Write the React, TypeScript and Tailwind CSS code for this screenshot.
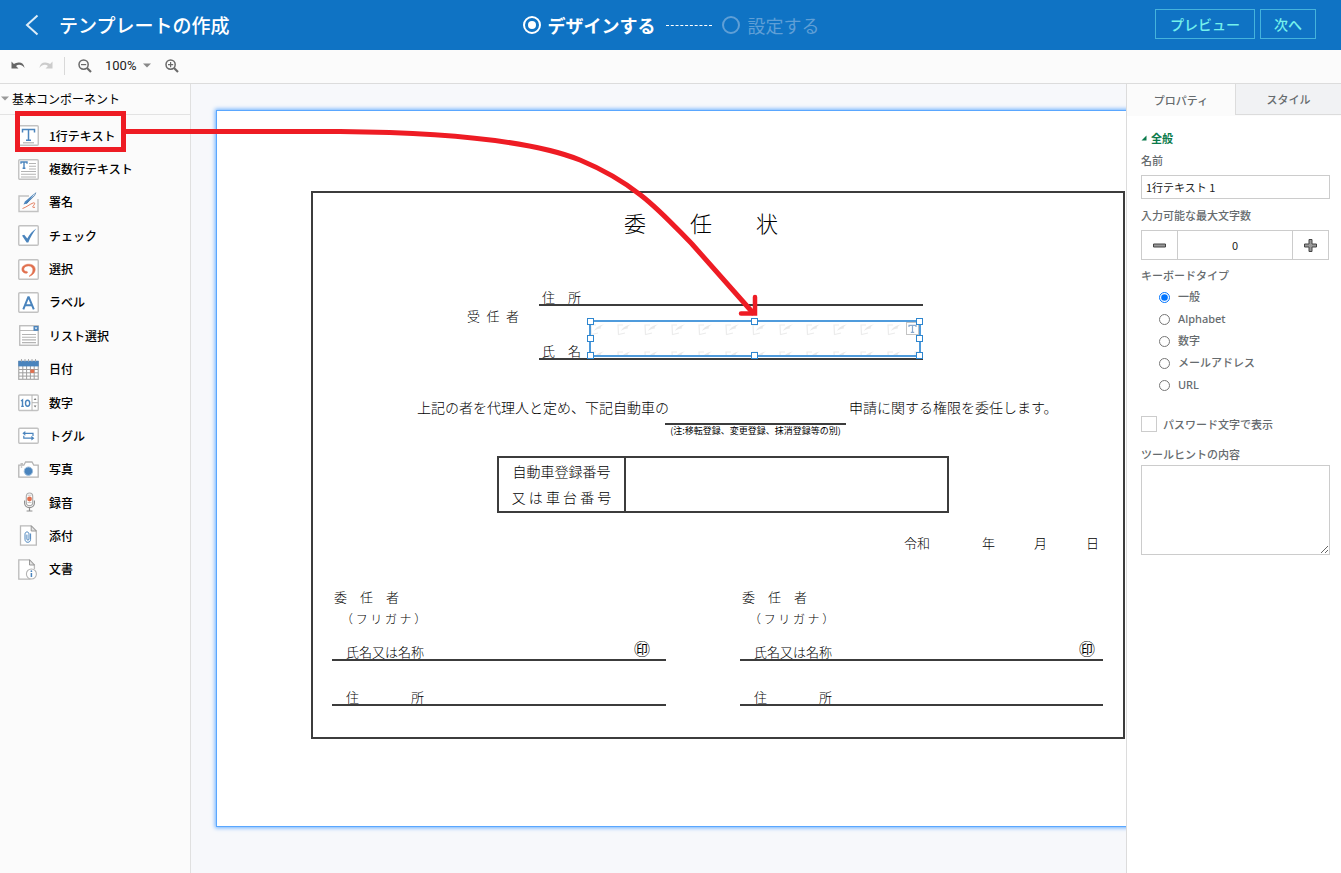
import React, { useState } from "react";

const PAPER_FONT = "font-['Noto_Sans_CJK_JP',sans-serif]";

const GREY = "#b4b4b4";
const BLUE = "#4a84bd";
const RED = "#e0704f";

function Svg({ children }: { children: React.ReactNode }) {
  return (
    <svg width="21" height="21" viewBox="0 0 21 21" fill="none" className="shrink-0" aria-hidden="true">
      {children}
    </svg>
  );
}

const Frame = ({ y = 0.75, h = 19.5 }: { y?: number; h?: number }) => (
  <rect x="0.75" y={y} width="19.5" height={h} rx="1" fill="#fff" stroke="#c2c2c2" strokeWidth="1.4" />
);

const icons = {
  text: (
    <Svg>
      <Frame />
      <path d="M4.5 7.5V4.5H16.5V7.5M10.5 4.5V15M8 15.2H13" stroke={BLUE} strokeWidth="1.5" />
      <path d="M5 17.8H16" stroke={GREY} strokeWidth="1.2" />
    </Svg>
  ),
  multiline: (
    <Svg>
      <Frame />
      <path d="M3 4.8V3H9V4.8M6 3V9M4.6 9.3H7.4" stroke={BLUE} strokeWidth="1.4" />
      <path d="M11 4.5H18M11 7.2H18M11 10H18M3 12.5H18M3 15.2H18M3 18H18" stroke={GREY} strokeWidth="1.1" />
    </Svg>
  ),
  sign: (
    <Svg>
      <path d="M11 4H1V19.5H20V7" stroke="#c2c2c2" strokeWidth="1.4" />
      <path d="M17.5 0.5L7 9.5L5.5 12.5L9 11.5Z" fill={BLUE} />
      <path d="M17.8 0.6L16.5 3.6L8.5 11.6" stroke="#34699d" strokeWidth="0.8" />
      <path d="M4.5 16.5C8 15.5 12 12 15.5 10.8C17.5 10.4 16.5 12.5 15.2 14C14 15.6 15.5 15.8 17 15.2" stroke={RED} strokeWidth="0.9" />
    </Svg>
  ),
  check: (
    <Svg>
      <Frame />
      <path d="M4 10.5L6.2 9.8L9.3 13.6C11.5 9.5 14.5 5.8 18.3 3.5C15 7.5 12.3 12.5 10.3 17.5H8.6Z" fill={BLUE} />
    </Svg>
  ),
  select: (
    <Svg>
      <Frame />
      <path
        d="M8.6 14.3C5.4 14.2 3.6 12.4 3.9 9.7C4.3 6.6 7.8 5 11.2 5.2C15 5.4 17.4 7.6 17.2 10.8C17 14 14.2 16.6 11 17.4C13 15.8 14.8 13.8 14.9 11C15 8.6 13.3 7 10.8 6.9C8 6.8 5.9 8.2 5.8 10C5.8 11.6 7 12.5 8.8 12.4C9.8 12.6 9.8 14.2 8.6 14.3Z"
        fill={RED}
        stroke={RED}
        strokeWidth="0.5"
      />
    </Svg>
  ),
  label: (
    <Svg>
      <Frame />
      <path d="M5.3 17.3L10.5 4.6L15.8 17.3M7.2 13.2H13.8" stroke={BLUE} strokeWidth="2" strokeLinejoin="bevel" />
    </Svg>
  ),
  list: (
    <Svg>
      <rect x="1.75" y="0.75" width="18.5" height="19.5" fill="#fff" stroke="#b9b9b9" strokeWidth="1.3" />
      <path d="M2 5.5H20" stroke="#b9b9b9" />
      <rect x="15.5" y="1" width="5" height="4.8" fill={BLUE} />
      <path d="M16.6 2.6H19.4L18 4.4Z" fill="#fff" />
      <path d="M4 9.5H18M4 12.2H18M4 14.9H18M4 17.6H18" stroke={GREY} strokeWidth="1.1" />
    </Svg>
  ),
  date: (
    <Svg>
      <rect x="0.75" y="2.5" width="19.5" height="17.8" fill="#fff" stroke="#a9a9a9" strokeWidth="1.2" />
      <path d="M1 10.5H20M1 13.8H20M1 17.1H20M4.8 7V20M8.6 7V20M12.4 7V20M16.2 7V20" stroke="#9e9e9e" />
      <rect x="0.3" y="1.8" width="20.4" height="5.6" fill={BLUE} />
      <path d="M3.5 0V2.6M7 0V2.6M10.5 0V2.6M14 0V2.6M17.5 0V2.6" stroke="#a9a9a9" />
      <rect x="12.3" y="10.5" width="4" height="3.4" fill={RED} />
    </Svg>
  ),
  number: (
    <Svg>
      <Frame y={3} h={15.5} />
      <path d="M14 3V18.5M14 10.7H20" stroke="#b4b4b4" />
      <path d="M15.7 8L17.1 6L18.5 8ZM15.7 13.5L17.1 15.5L18.5 13.5Z" fill="#777" />
      <path d="M3 9L4.5 7.9V14.6M3.2 14.4H5.8" stroke={BLUE} strokeWidth="1.4" />
      <ellipse cx="9.6" cy="11.2" rx="2.1" ry="3" stroke={BLUE} strokeWidth="1.4" />
    </Svg>
  ),
  toggle: (
    <Svg>
      <Frame y={3.2} h={15} />
      <path d="M15 11V8.3H6" stroke={BLUE} strokeWidth="1.2" />
      <path d="M7.3 5.9V10.7L4.4 8.3Z" fill={BLUE} />
      <path d="M5.8 10.8V13.2H14" stroke={BLUE} strokeWidth="1.2" />
      <path d="M13.4 10.8V15.6L16.4 13.2Z" fill={BLUE} />
    </Svg>
  ),
  photo: (
    <Svg>
      <path d="M0.8 6.2H5.8L7.6 3H14L15.8 6.2H20.2V18.2H0.8Z" fill="#fff" stroke="#b4b4b4" strokeWidth="1.3" />
      <path d="M2.5 4.9H5M2.8 8H4.2" stroke="#999" />
      <circle cx="10.4" cy="12.2" r="4.2" fill={BLUE} stroke="#9cbcdb" strokeWidth="1" />
    </Svg>
  ),
  record: (
    <Svg>
      <rect x="8.3" y="1" width="6.4" height="12.6" rx="3.2" fill="#fff" stroke="#a9a9a9" strokeWidth="1.1" />
      <path d="M9.5 3.2H13.5M9.5 10.6H13.5" stroke="#c4c4c4" />
      <circle cx="11.5" cy="7" r="2.4" fill={RED} />
      <path d="M6.6 8.5V11C6.6 13.8 8.8 15.6 11.5 15.6C14.2 15.6 16.4 13.8 16.4 11V8.5M11.5 15.6V18.6M8.6 19H14.4" stroke="#8f8f8f" strokeWidth="1.2" />
    </Svg>
  ),
  attach: (
    <Svg>
      <path d="M2.5 0.8H13.2L18.3 6V20.2H2.5Z" fill="#fff" stroke="#b9b9b9" strokeWidth="1.3" />
      <path d="M13.2 0.8V6H18.3Z" fill="#e4e4e4" stroke="#8f8f8f" strokeWidth="0.9" />
      <path d="M12.6 8.5V14.3C12.6 18.3 7 18.3 7 14.3V9.2C7 6.2 11 6.2 11 9.2V14C11 15.6 8.9 15.6 8.9 14V9.6" stroke={BLUE} strokeWidth="1" />
    </Svg>
  ),
  document: (
    <Svg>
      <path d="M12.5 20.2H0.8V0.8H11.5L16.4 6V10" fill="#fff" stroke="#b9b9b9" strokeWidth="1.3" />
      <path d="M11.5 0.8V6H16.4Z" fill="#e4e4e4" stroke="#8f8f8f" strokeWidth="0.9" />
      <circle cx="13.4" cy="15" r="5" fill="#fff" stroke="#b4b4b4" strokeWidth="1.1" />
      <path d="M13.4 14V18" stroke={BLUE} strokeWidth="1.5" />
      <circle cx="13.4" cy="12.2" r="0.9" fill={BLUE} />
    </Svg>
  ),
};

const COMPONENTS: { icon: keyof typeof icons; label: string }[] = [
  { icon: "text", label: "1行テキスト" },
  { icon: "multiline", label: "複数行テキスト" },
  { icon: "sign", label: "署名" },
  { icon: "check", label: "チェック" },
  { icon: "select", label: "選択" },
  { icon: "label", label: "ラベル" },
  { icon: "list", label: "リスト選択" },
  { icon: "date", label: "日付" },
  { icon: "number", label: "数字" },
  { icon: "toggle", label: "トグル" },
  { icon: "photo", label: "写真" },
  { icon: "record", label: "録音" },
  { icon: "attach", label: "添付" },
  { icon: "document", label: "文書" },
];

function Header() {
  return (
    <header className="grid h-[50px] grid-cols-[1fr_auto_1fr] items-center bg-[#0f73c4] pr-[25px] pl-6 text-white">
      <div className="flex items-center gap-[19px]">
        <button type="button" aria-label="戻る" className="flex h-6 w-4 items-center justify-center">
          <svg width="16" height="24" viewBox="0 0 16 24" fill="none" stroke="#dcecf8" strokeWidth="2">
            <path d="M13.5 2.5L3 12L13.5 21.5" />
          </svg>
        </button>
        <h1 className="text-[19px] leading-6 font-medium">テンプレートの作成</h1>
      </div>
      <ol className="flex items-center pl-[2px] text-[18px] leading-6">
        <li className="flex items-center gap-[7px] font-bold">
          <span className="flex size-[18px] items-center justify-center rounded-full border-2 border-white">
            <span className="size-2 rounded-full bg-white" />
          </span>
          デザインする
        </li>
        <li aria-hidden="true" className="mx-[10px] w-[46px] border-t border-dashed border-white" />
        <li className="flex items-center gap-2 text-[#5f9fd6]">
          <span className="size-[18px] rounded-full border-2 border-[#5f9fd6]" />
          設定する
        </li>
      </ol>
      <div className="flex justify-end gap-[5px] pb-[2px] text-[14px] font-medium text-[#74f0ec]">
        <button type="button" className="h-[30px] w-[100px] border border-[#45b3dc]">プレビュー</button>
        <button type="button" className="h-[30px] w-14 border border-[#45b3dc]">次へ</button>
      </div>
    </header>
  );
}

function Magnifier({ plus }: { plus?: boolean }) {
  return (
    <svg width="14" height="14" viewBox="0 0 14 14" fill="none" stroke="#6a6a6a">
      <circle cx="5.6" cy="5.6" r="4.6" strokeWidth="1.5" />
      <path d={plus ? "M3 5.6H8.2M5.6 3V8.2" : "M3 5.6H8.2"} strokeWidth="1.2" />
      <path d="M9 9L13 13" strokeWidth="2.2" />
    </svg>
  );
}

function Toolbar() {
  return (
    <div className="flex h-[34px] items-center border-b border-[#dcdcdc] bg-[#fbfbfb] pb-[2px] pl-[11px]">
      <button type="button" aria-label="元に戻す">
        <svg width="15" height="12" viewBox="0 0 15 12">
          <path d="M0.5 1.5V8.5H7.5L5 6C7.5 4 11 4.6 13.6 8C13 4.2 10.6 2.4 7.6 2.6C5.7 2.7 4.2 3.4 2.9 4Z" fill="#666" />
        </svg>
      </button>
      <button type="button" aria-label="やり直し" className="ml-3">
        <svg width="15" height="12" viewBox="0 0 15 12">
          <path d="M14.5 1.5V8.5H7.5L10 6C7.5 4 4 4.6 1.4 8C2 4.2 4.4 2.4 7.4 2.6C9.3 2.7 10.8 3.4 12.1 4Z" fill="#ccc" />
        </svg>
      </button>
      <span className="ml-[11px] h-[18px] w-px bg-[#d9d9d9]" />
      <button type="button" aria-label="縮小" className="ml-[13px]">
        <Magnifier />
      </button>
      <button type="button" className="ml-[13px] flex items-center gap-[7px] font-[Roboto,sans-serif] text-[13px] leading-4 text-[#222]">
        100%
        <svg width="8" height="5" viewBox="0 0 8 5">
          <path d="M0 0.5H8L4 4.5Z" fill="#888" />
        </svg>
      </button>
      <button type="button" aria-label="拡大" className="ml-[14px]">
        <Magnifier plus />
      </button>
    </div>
  );
}

function Palette() {
  return (
    <aside className="w-[191px] shrink-0 border-r border-[#e0e0e0] bg-[#fbfbfb] text-black">
      <h2 className="flex h-[31px] items-center gap-[3px] border-b border-[#e3e3e3] pb-px pl-px text-[12px]">
        <svg width="8" height="5" viewBox="0 0 8 5">
          <path d="M0 0.5H8L4 4.5Z" fill="#999" />
        </svg>
        基本コンポーネント
      </h2>
      <ul className="mt-1 flex h-[467px] flex-col">
        {COMPONENTS.map(({ icon, label }) => (
          <li key={label} className="flex flex-1">
            <button type="button" className="flex flex-1 items-center gap-[10px] pl-[18px] text-left text-[12px] font-medium">
              {icons[icon]}
              {label}
            </button>
          </li>
        ))}
      </ul>
    </aside>
  );
}

function Signatory({ sealInset }: { sealInset: string }) {
  return (
    <div>
      <p className="h-5 pl-[2px] leading-5">委　任　者</p>
      <p className="mt-[2px] h-5 pl-[9px] text-[12px] leading-5">（ フ リ ガ ナ ）</p>
      <div className={`mt-[2px] flex h-[30px] items-end justify-between border-b-2 border-[#3c3c3c] pl-[14px] ${sealInset}`}>
        <span className="leading-[14px]">氏名又は名称</span>
        <span className="pb-px text-[16px] leading-5 font-normal">㊞</span>
      </div>
      <div className="flex h-[45px] items-end border-b-2 border-[#3c3c3c] pl-[14px]">
        <span className="leading-[14px]">住　　　　所</span>
      </div>
    </div>
  );
}

function SelectedField() {
  const handle = "absolute size-[7px] border border-[#2e86cf] bg-white";
  return (
    <div className="absolute top-[209px] left-[372px] h-[37px] w-[332px] border-2 border-[#4f9bdc] bg-white">
      <svg width="100%" height="100%" className="block" aria-hidden="true">
        <defs>
          <pattern id="marks" x="-2" width="27" height="27" patternUnits="userSpaceOnUse">
            <path d="M7 3H2L2.500 12.500L9 11" fill="none" stroke="#ececec" strokeWidth="1.200" />
            <path d="M5 9C7 5 11 3 15 2.500C12 4 11 5.500 12 6.500C9 6.500 7 7.500 5 9Z" fill="#e9e9e9" />
          </pattern>
        </defs>
        <rect width="100%" height="100%" fill="url(#marks)" />
      </svg>
      <svg width="13" height="13" viewBox="0 0 13 13" className="absolute top-0 right-0" aria-hidden="true">
        <rect x="0.5" y="0.5" width="12" height="12" fill="#fff" stroke="#c4c4c4" />
        <path d="M3 5V3.300H10V5M6.500 3.300V10M4.800 10.300H8.200" fill="none" stroke="#8aa9cc" strokeWidth="1.200" />
      </svg>
      <i className={`${handle} -top-1 -left-1`} />
      <i className={`${handle} -top-1 left-1/2 -ml-1`} />
      <i className={`${handle} -top-1 -right-1`} />
      <i className={`${handle} top-1/2 -left-1 -mt-1`} />
      <i className={`${handle} top-1/2 -right-1 -mt-1`} />
      <i className={`${handle} -bottom-1 -left-1`} />
      <i className={`${handle} -bottom-1 left-1/2 -ml-1`} />
      <i className={`${handle} -right-1 -bottom-1`} />
    </div>
  );
}

function Paper() {
  return (
    <div className={`relative w-[1014px] shrink-0 border border-[#5aa7ff] bg-white pt-20 pb-[87px] pl-[94px] text-[13px] text-black shadow-[0_0_4px_1px_#6cb0ff] ${PAPER_FONT}`}>
      <article className="w-[814px] border-2 border-[#3c3c3c] pb-[31px] font-light">
        <h2 className="pt-[13px] pr-[34px] text-center text-[22px] leading-8">委　　任　　状</h2>

        <div className="mt-[50px] flex pl-[154px]">
          <p className="mt-[18px] h-5 w-[72px] leading-5">受&#8194;任&#8194;者</p>
          <div className="w-[384px]">
            <p className="flex h-[18px] items-end border-b-2 border-[#3c3c3c] pl-[3px] leading-[14px]">住　所</p>
            <p className="flex h-[54px] items-end border-b-2 border-[#3c3c3c] pl-[3px] leading-[14px]">氏　名</p>
          </div>
        </div>

        <div className="mt-[37px] grid grid-cols-[248px_181px_auto] pl-[104px] text-[14px]">
          <p className="leading-5 whitespace-nowrap">上記の者を代理人と定め、下記自動車の</p>
          <div>
            <div className="h-7 border-b-2 border-[#3c3c3c]" />
            <p className="text-center text-[9px] leading-[12px] font-normal whitespace-nowrap">(注:移転登録、変更登録、抹消登録等の別)</p>
          </div>
          <p className="pl-[3px] leading-5 whitespace-nowrap">申請に関する権限を委任します。</p>
        </div>

        <table className="mt-[19px] ml-[184px] w-[452px] border-collapse border-2 border-[#3c3c3c] text-[14px]">
          <tbody>
            <tr>
              <th className="w-[127px] border-r-2 border-[#3c3c3c] p-0 pb-px text-center font-light">
                <span className="block leading-[26px]">自動車登録番号</span>
                <span className="block leading-[26px]">又 は 車 台 番 号</span>
              </th>
              <td />
            </tr>
          </tbody>
        </table>

        <p className="mt-5 pr-6 text-right leading-5">令和　　　　年　　　月　　　日</p>

        <div className="mt-[34px] grid grid-cols-[334px_363px] gap-x-[74px] pl-[19px]">
          <Signatory sealInset="pr-4" />
          <Signatory sealInset="pr-2" />
        </div>
      </article>
      <SelectedField />
    </div>
  );
}

const KEYBOARDS = ["一般", "Alphabet", "数字", "メールアドレス", "URL"];

function Properties() {
  const [keyboard, setKeyboard] = useState(KEYBOARDS[0]);
  const [name, setName] = useState("1行テキスト 1");
  const [max, setMax] = useState(0);
  return (
    <aside className="w-[215px] shrink-0 border-l border-[#dcdcdc] bg-white text-[11px] font-medium text-[#666b6e]">
      <div role="tablist" className="flex h-8 bg-[#fbfbfb]">
        <button type="button" role="tab" aria-selected="true" className="h-8 w-[108px]">プロパティ</button>
        <button type="button" role="tab" aria-selected="false" className="h-[31px] flex-1 border-b border-l border-[#dcdcdc] bg-[#f1f2f4]">
          スタイル
        </button>
      </div>
      <div className="flex flex-col pt-3 pr-[11px] pl-[14px] leading-5">
        <h3 className="flex items-center gap-1 font-bold text-[#0b7a4b]">
          <svg width="6" height="6" viewBox="0 0 6 6">
            <path d="M5.500 0.500V5.500H0.500Z" fill="#0b7a4b" />
          </svg>
          全般
        </h3>
        <label htmlFor="field-name" className="mt-[2px]">名前</label>
        <input
          id="field-name"
          value={name}
          onChange={(e) => setName(e.target.value)}
          className="mt-[5px] h-6 w-full border border-[#ccc] px-1 font-normal text-[#222] outline-none"
        />
        <label htmlFor="field-max" className="mt-[6px]">入力可能な最大文字数</label>
        <div className="mt-[5px] mr-px flex h-[30px] border border-[#ccc]">
          <button type="button" aria-label="減らす" onClick={() => setMax(Math.max(0, max - 1))} className="flex w-[35px] items-center justify-center">
            <svg width="13" height="13" viewBox="0 0 13 13">
              <path d="M0.500 5H12.500V8H0.500Z" fill="#999" stroke="#444" />
            </svg>
          </button>
          <input
            id="field-max"
            value={max}
            onChange={(e) => setMax(Number(e.target.value) || 0)}
            className="min-w-0 flex-1 border-x border-[#ccc] text-center font-normal text-[#222] outline-none"
          />
          <button type="button" aria-label="増やす" onClick={() => setMax(max + 1)} className="flex w-[35px] items-center justify-center">
            <svg width="13" height="13" viewBox="0 0 13 13">
              <path d="M5 0.500H8V5H12.500V8H8V12.500H5V8H0.500V5H5Z" fill="#999" stroke="#444" />
            </svg>
          </button>
        </div>
        <fieldset className="mt-[5px]">
          <legend>キーボードタイプ</legend>
          <div className="mt-px">
            {KEYBOARDS.map((k) => (
              <label key={k} className="flex h-[22px] items-center gap-2 pl-[18px] font-[Noto_Sans,Noto_Sans_CJK_JP,sans-serif]">
                <input
                  type="radio"
                  name="keyboard"
                  checked={keyboard === k}
                  onChange={() => setKeyboard(k)}
                  className="size-[11px] accent-[#0075ff]"
                />
                {k}
              </label>
            ))}
          </div>
        </fieldset>
        <label className="mt-[18px] flex items-center gap-[6px]">
          <input type="checkbox" className="size-4 appearance-none border border-[#ccc] bg-white checked:bg-[#0075ff]" />
          パスワード文字で表示
        </label>
        <label htmlFor="field-hint" className="mt-[10px]">ツールヒントの内容</label>
        <textarea id="field-hint" className="mt-px h-[90px] w-full border border-[#ccc] outline-none" />
      </div>
    </aside>
  );
}

function DragHint() {
  return (
    <svg
      width="760"
      height="320"
      viewBox="0 0 760 320"
      fill="none"
      stroke="#ee1c24"
      strokeWidth="5"
      className="pointer-events-none absolute top-0 left-0"
      aria-hidden="true"
    >
      <rect x="17.500" y="113.500" width="106" height="36" />
      <path d="M126 131.500H340C440 132.500 530 140 580 160C640 185 665 217 692 244L754 314" />
      <path d="M741 313.500H755V297" strokeLinecap="round" strokeWidth="4.500" />
    </svg>
  );
}

export default function App() {
  return (
    <div className="relative flex min-h-screen flex-col font-['Noto_Sans_CJK_JP',sans-serif]">
      <Header />
      <Toolbar />
      <div className="flex flex-1">
        <Palette />
        <main className="flex min-w-0 flex-1 items-start overflow-hidden bg-[#f7f8fb] pt-[26px] pb-[45px] pl-[25px]">
          <Paper />
        </main>
        <Properties />
      </div>
      <DragHint />
    </div>
  );
}
